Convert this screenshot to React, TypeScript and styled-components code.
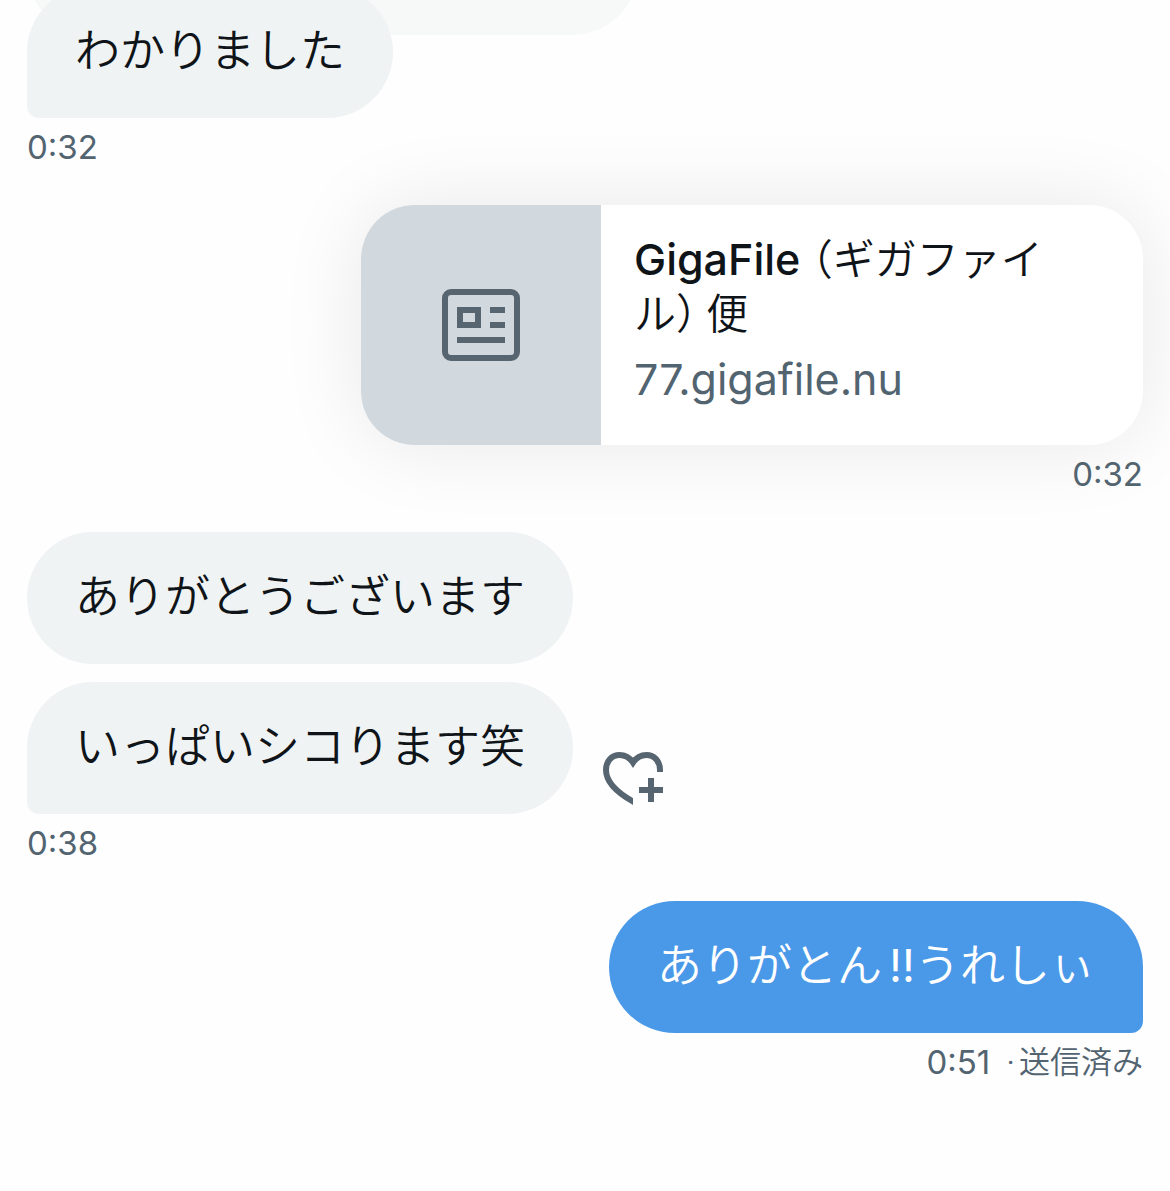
import React from "react";
import styled, { createGlobalStyle } from "styled-components";

const GlobalStyle = createGlobalStyle`
  *, *::before, *::after { box-sizing: border-box; }
  body {
    margin: 0;
    background: #fefefe;
    color: #0f1419;
    font-family: Inter, "Noto Sans CJK JP", sans-serif;
    overflow-x: hidden;
  }
`;

const Conversation = styled.main`
  position: relative;
  display: flex;
  flex-direction: column;
  gap: 37px;
  margin-top: -14px;
  padding: 0 27px 64px;
`;

const Group = styled.section<{ $mine?: boolean }>`
  position: relative;
  display: flex;
  flex-direction: column;
  align-items: ${(p) => (p.$mine ? "flex-end" : "flex-start")};
`;

const BubbleRow = styled.div`
  display: flex;
  align-items: flex-end;
  gap: 30px;
  & + & {
    margin-top: 18px;
  }
`;

const Bubble = styled.p<{ $mine?: boolean; $tail?: boolean }>`
  margin: 0;
  padding: 33px 48px 35px;
  border-radius: 66px;
  ${(p) =>
    p.$tail &&
    (p.$mine
      ? "border-bottom-right-radius: 12px;"
      : "border-bottom-left-radius: 12px;")}
  background: ${(p) => (p.$mine ? "#4a99e9" : "#eff3f4")};
  color: ${(p) => (p.$mine ? "#ffffff" : "#0f1419")};
  font-size: 45px;
  font-weight: 350;
  line-height: 64px;
`;

const Exclamation = styled.span`
  padding-left: 7px;
  font-weight: 400;
`;

const FadingBubble = styled.div`
  position: absolute;
  top: -83px;
  left: 27px;
  width: 611px;
  max-width: 90%;
  height: 132px;
  border-radius: 66px;
  background: #f7f9f9;
`;

const Meta = styled.div`
  display: flex;
  align-items: center;
  gap: 16px;
  margin-top: 9px;
  margin-bottom: 1px;
  color: #536471;
  font-size: 33px;
  line-height: 40px;
`;

const Status = styled.span`
  display: flex;
  gap: 4px;
  font-size: 31px;
  font-weight: 350;
`;

const LinkCard = styled.a`
  display: flex;
  width: 782px;
  max-width: 100%;
  min-height: 240px;
  overflow: hidden;
  border-radius: 54px;
  background: #ffffff;
  box-shadow: 0 0 84px rgba(0, 0, 0, 0.09);
  color: inherit;
  text-decoration: none;
`;

const Thumbnail = styled.span`
  display: flex;
  flex: 0 0 240px;
  align-items: center;
  justify-content: center;
  background: #d1d8de;
  color: #566570;
`;

const LinkText = styled.span`
  display: flex;
  flex: 1;
  flex-direction: column;
  gap: 12px;
  min-width: 0;
  padding: 27px 64px 24px 33px;
`;

const LinkTitle = styled.span`
  font-size: 43px;
  font-weight: 450;
  line-height: 54px;
`;

const Kana = styled.span`
  font-family: "Noto Sans CJK JP", sans-serif;
  font-size: 42px;
  font-weight: 350;
  font-feature-settings: "halt";
  line-height: 1;
`;

const LinkDomain = styled.span`
  color: #536471;
  font-size: 43px;
  line-height: 54px;
`;

const ReactButton = styled.button`
  display: flex;
  margin: 0 0 8px;
  padding: 0;
  border: 0;
  background: none;
  color: #566570;
  cursor: pointer;
`;

function NewsIcon() {
  return (
    <svg width="78" height="72" viewBox="0 0 78 72" fill="none" stroke="currentColor" strokeWidth="6" aria-hidden="true">
      <rect x="3" y="3" width="72" height="66" rx="6" />
      <rect x="18" y="21" width="18" height="15" />
      <path d="M48 21H63M48 36H63M15 51H63" />
    </svg>
  );
}

function HeartPlusIcon() {
  return (
    <svg width="60" height="54" viewBox="0 0 60 54" fill="none" stroke="currentColor" strokeWidth="6" aria-hidden="true">
      <clipPath id="heart-outline">
        <path d="M0 0H60V20H30V54H0Z" />
      </clipPath>
      <path
        clipPath="url(#heart-outline)"
        d="M57 21V18C57 9 51 3 43.500 3C38 3 33 6 30 10.500C27 6 22 3 16.500 3C9 3 3 9 3 18C3 30 14 40.500 30 49.500L34 51.500"
      />
      <path d="M36 38H60M48 26V50" />
    </svg>
  );
}

export default function App() {
  return (
    <>
      <GlobalStyle />
      <Conversation>
        <FadingBubble />
        <Group>
          <Bubble $tail>わかりました</Bubble>
          <Meta>
            <time>0:32</time>
          </Meta>
        </Group>
        <Group $mine>
          <LinkCard href="#gigafile">
            <Thumbnail>
              <NewsIcon />
            </Thumbnail>
            <LinkText>
              <LinkTitle>
                GigaFile <Kana>（ギガファイル） 便</Kana>
              </LinkTitle>
              <LinkDomain>77.gigafile.nu</LinkDomain>
            </LinkText>
          </LinkCard>
          <Meta>
            <time>0:32</time>
          </Meta>
        </Group>
        <Group>
          <BubbleRow>
            <Bubble>ありがとうございます</Bubble>
          </BubbleRow>
          <BubbleRow>
            <Bubble $tail>いっぱいシコります笑</Bubble>
            <ReactButton type="button" aria-label="リアクションを追加">
              <HeartPlusIcon />
            </ReactButton>
          </BubbleRow>
          <Meta>
            <time>0:38</time>
          </Meta>
        </Group>
        <Group $mine>
          <Bubble $mine $tail>
            ありがとん<Exclamation>‼</Exclamation>うれしぃ
          </Bubble>
          <Meta>
            <time>0:51</time>
            <Status>
              <span>·</span>
              <span>送信済み</span>
            </Status>
          </Meta>
        </Group>
      </Conversation>
    </>
  );
}
